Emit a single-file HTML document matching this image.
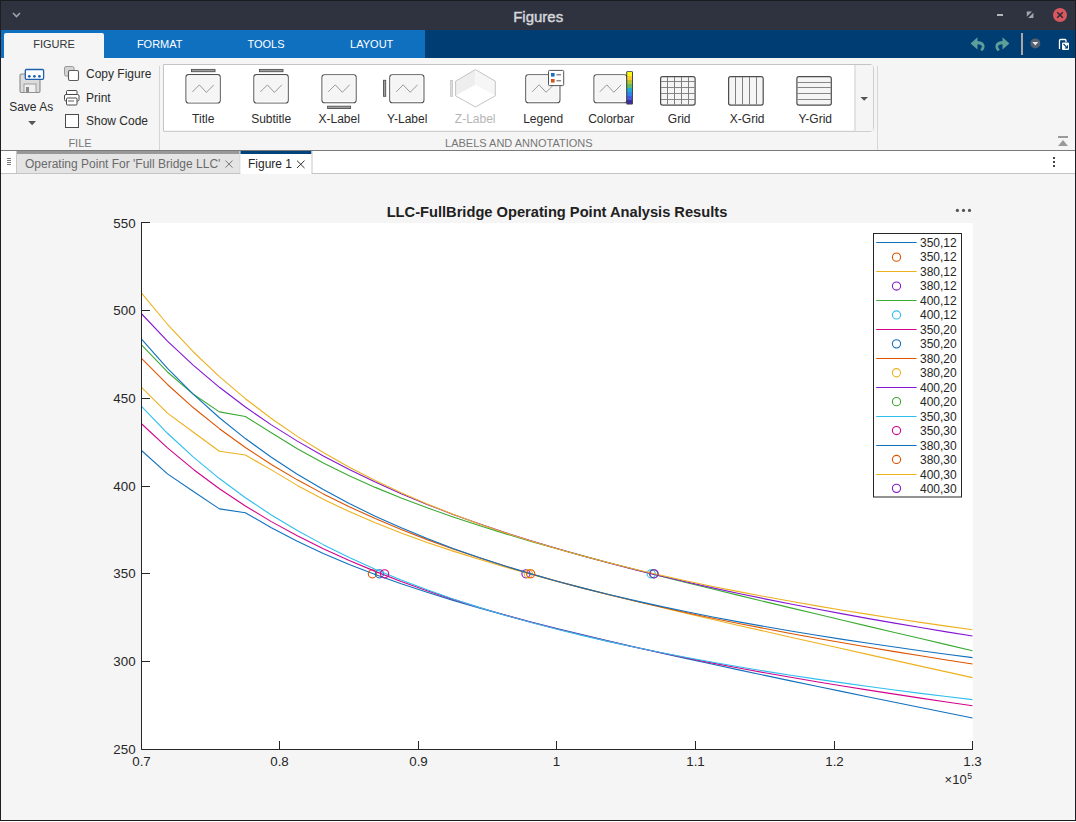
<!DOCTYPE html>
<html><head><meta charset="utf-8">
<style>
html,body{margin:0;padding:0;width:1076px;height:822px;overflow:hidden;background:#ffffff;}
svg{display:block;font-family:"Liberation Sans",sans-serif;}
.ui{font-size:12px;fill:#2b2b2b;}
.xt{font-size:13.33px;fill:#262626;text-anchor:middle;stroke:none;}
.yt{font-size:13.33px;fill:#262626;text-anchor:end;stroke:none;}
</style></head>
<body>
<svg width="1076" height="822" viewBox="0 0 1076 822">
<!-- window frame bg -->
<rect x="0" y="0" width="1076" height="822" fill="#ffffff"/>
<!-- title bar -->
<rect x="0" y="0" width="1076" height="30" fill="#2f3340"/>
<rect x="0" y="0" width="1076" height="1" fill="#1a1b20"/>
<path d="M13 13 L16.5 16.5 L20 13" stroke="#a0a3a8" stroke-width="1.6" fill="none"/>
<text x="538.2" y="22" text-anchor="middle" style="font-size:15px;fill:#d4d6da;stroke:#d4d6da;stroke-width:0.45">Figures</text>
<rect x="997" y="14" width="6" height="2" fill="#b4b6ba"/>
<path d="M1026.8 11.6 L1032 11.6 L1026.8 16.8 Z M1033.4 17.9 L1028.2 17.9 L1033.4 12.7 Z" fill="#a4a6aa"/>
<circle cx="1060" cy="15" r="7" fill="#d9575f"/>
<path d="M1057.2 12.2 L1062.8 17.8 M1062.8 12.2 L1057.2 17.8" stroke="#2b2b33" stroke-width="1.5"/>

<!-- tab strip -->
<rect x="0" y="30" width="1076" height="28" fill="#003d73"/>
<rect x="1" y="30" width="424" height="28" fill="#1070c0"/>
<path d="M4 58 L4 35 Q4 33 6 33 L102 33 Q104 33 104 35 L104 58 Z" fill="#f5f5f5"/>
<text x="54" y="48" text-anchor="middle" style="font-size:11px;fill:#333">FIGURE</text>
<text x="159.7" y="48" text-anchor="middle" style="font-size:11px;fill:#ffffff">FORMAT</text>
<text x="266" y="48" text-anchor="middle" style="font-size:11px;fill:#ffffff">TOOLS</text>
<text x="371.7" y="48" text-anchor="middle" style="font-size:11px;fill:#ffffff">LAYOUT</text>
<!-- undo / redo -->
<path d="M970.6 43.4 L977.5 37.3 L977.5 41 Q984.6 41.2 984.6 46.6 Q984.6 49.6 982.2 51.3 L980.2 49.4 Q981.9 48.4 981.9 46.6 Q981.9 44.3 977.5 44.2 L977.5 49.6 Z" fill="#5e9e9a"/>
<path d="M1009.4 43.4 L1002.5 37.3 L1002.5 41 Q995.4 41.2 995.4 46.6 Q995.4 49.6 997.8 51.3 L999.8 49.4 Q998.1 48.4 998.1 46.6 Q998.1 44.3 1002.5 44.2 L1002.5 49.6 Z" fill="#5e9e9a"/>
<rect x="1021" y="33" width="2" height="22" fill="#aaa6a4"/>
<circle cx="1035.3" cy="43.4" r="5" fill="#56606c"/>
<path d="M1032.3 42 L1038.3 42 L1035.3 45.5 Z" fill="#dfe8f5"/>
<path d="M1059.5 49 L1059.5 40.5 Q1059.5 39.5 1060.5 39.5 L1065 39.5 Q1066 39.5 1066 40.5 L1066 42" stroke="#ffffff" stroke-width="1.3" fill="none"/>
<rect x="1062" y="42.5" width="7" height="7.5" rx="1" fill="#ffffff"/>
<path d="M1063.5 44 L1067.3 47.8 M1067.5 45.3 L1067.5 48 L1064.8 48" stroke="#003d73" stroke-width="1.1" fill="none"/>

<!-- toolstrip body -->
<rect x="1" y="58" width="1074" height="92" fill="#f5f5f5"/>
<rect x="1" y="150" width="1074" height="1" fill="#7a7a7a"/>
<!-- FILE section -->

<path d="M21.5 74 L36 74 L40 78 L40 91 Q40 92.5 38.5 92.5 L21.5 92.5 Q20 92.5 20 91 L20 75.5 Q20 74 21.5 74 Z" fill="#dcdcdc" stroke="#8a8a8a" stroke-width="1.1"/>
<rect x="24" y="84" width="12" height="8.5" fill="#f0f0f0" stroke="#8a8a8a" stroke-width="0.8"/>
<rect x="26" y="87" width="3" height="5.5" fill="#8a8a8a"/>
<rect x="25.3" y="69.5" width="18.3" height="9.8" rx="1.2" fill="#ffffff" stroke="#1f5fb0" stroke-width="1.3"/>
<g fill="#1f5fb0"><circle cx="29.3" cy="76.3" r="1.35"/><circle cx="34.4" cy="76.3" r="1.35"/><circle cx="39.4" cy="76.3" r="1.35"/></g>
<text x="31.2" y="110.6" text-anchor="middle" class="ui">Save As</text>
<path d="M28.2 121 L36 121 L32.1 125.2 Z" fill="#555"/>
<rect x="64.5" y="66.5" width="9.5" height="9.5" rx="1.5" fill="#d4d4d4" stroke="#9a9a9a" stroke-width="1"/>
<rect x="68.5" y="70.5" width="10" height="10" rx="1.5" fill="#ffffff" stroke="#5a5a5a" stroke-width="1.1"/>
<text x="86" y="77.8" class="ui">Copy Figure</text>
<path d="M66.5 95 L66.5 91.5 Q66.5 90.5 67.5 90.5 L76 90.5 Q77 90.5 77 91.5 L77 95" fill="#ffffff" stroke="#4a4a4a" stroke-width="1"/>
<rect x="64.5" y="94.5" width="14.5" height="6.5" rx="1.5" fill="#ffffff" stroke="#4a4a4a" stroke-width="1"/>
<rect x="66.5" y="98" width="10.5" height="7" rx="1" fill="#ffffff" stroke="#4a4a4a" stroke-width="1"/>
<rect x="68" y="100.5" width="6" height="1" fill="#5a5a5a"/>
<text x="86" y="101.8" class="ui">Print</text>
<rect x="65.5" y="114.5" width="13" height="13" fill="#ffffff" stroke="#4a4a4a" stroke-width="1"/>
<text x="86" y="124.7" class="ui">Show Code</text>
<text x="80" y="146.8" text-anchor="middle" style="font-size:11px;fill:#777">FILE</text>

<rect x="159" y="66" width="1" height="84" fill="#d6d6d6"/>
<!-- labels gallery panel -->
<path d="M163.5 131.3 L163.5 64.5 L870 64.5 Q873.3 64.5 873.3 67.8 L873.3 128 Q873.3 131.3 870 131.3 Z" fill="#ffffff" stroke="#c4c4c4" stroke-width="1"/>
<rect x="854.5" y="65" width="18.3" height="65.8" fill="#f5f5f5"/>
<rect x="854.5" y="65" width="1" height="65.8" fill="#d0d0d0"/>
<path d="M860.4 97 L868 97 L864.2 100.7 Z" fill="#555"/>
<rect x="877" y="66" width="1" height="84" fill="#d6d6d6"/>
<text x="203.2" y="122.6" text-anchor="middle" style="font-size:12px;fill:#2b2b2b">Title</text>
<text x="271.2" y="122.6" text-anchor="middle" style="font-size:12px;fill:#2b2b2b">Subtitle</text>
<text x="339.2" y="122.6" text-anchor="middle" style="font-size:12px;fill:#2b2b2b">X-Label</text>
<text x="407.2" y="122.6" text-anchor="middle" style="font-size:12px;fill:#2b2b2b">Y-Label</text>
<text x="475.2" y="122.6" text-anchor="middle" style="font-size:12px;fill:#b4b4b4">Z-Label</text>
<text x="543.2" y="122.6" text-anchor="middle" style="font-size:12px;fill:#2b2b2b">Legend</text>
<text x="611.2" y="122.6" text-anchor="middle" style="font-size:12px;fill:#2b2b2b">Colorbar</text>
<text x="679.2" y="122.6" text-anchor="middle" style="font-size:12px;fill:#2b2b2b">Grid</text>
<text x="747.2" y="122.6" text-anchor="middle" style="font-size:12px;fill:#2b2b2b">X-Grid</text>
<text x="815.2" y="122.6" text-anchor="middle" style="font-size:12px;fill:#2b2b2b">Y-Grid</text>
<rect x="186.0" y="74.6" width="34.2" height="28.4" rx="2.5" fill="#f5f5f5" stroke="#505050" stroke-width="1.15"/><rect x="187.1" y="75.7" width="32.0" height="26.2" rx="1.5" fill="none" stroke="#ffffff" stroke-width="0.9"/><path d="M192.4 91.9 L199.4 84.9 L206.4 92.4 L213.8 84.9" stroke="#7a7a7a" stroke-width="0.75" fill="none"/>
<rect x="191.5" y="69.4" width="23.5" height="2.3" fill="#a0a0a0" stroke="#505050" stroke-width="0.9"/>
<rect x="253.9" y="74.6" width="34.3" height="28.4" rx="2.5" fill="#f5f5f5" stroke="#505050" stroke-width="1.15"/><rect x="255.0" y="75.7" width="32.1" height="26.2" rx="1.5" fill="none" stroke="#ffffff" stroke-width="0.9"/><path d="M260.4 91.9 L267.4 84.9 L274.4 92.4 L281.8 84.9" stroke="#7a7a7a" stroke-width="0.75" fill="none"/>
<rect x="259.5" y="69.4" width="23.5" height="2.3" fill="#a0a0a0" stroke="#505050" stroke-width="0.9"/>
<rect x="322.0" y="74.7" width="34.1" height="28.0" rx="2.5" fill="#f5f5f5" stroke="#505050" stroke-width="1.15"/><rect x="323.1" y="75.8" width="31.9" height="25.8" rx="1.5" fill="none" stroke="#ffffff" stroke-width="0.9"/><path d="M328.3 91.8 L335.3 84.8 L342.3 92.3 L349.7 84.8" stroke="#7a7a7a" stroke-width="0.75" fill="none"/>
<rect x="327.6" y="106.2" width="23" height="2.3" fill="#a0a0a0" stroke="#505050" stroke-width="0.9"/>
<rect x="389.8" y="74.7" width="34.1" height="28.0" rx="2.5" fill="#f5f5f5" stroke="#505050" stroke-width="1.15"/><rect x="390.9" y="75.8" width="31.9" height="25.8" rx="1.5" fill="none" stroke="#ffffff" stroke-width="0.9"/><path d="M396.2 91.8 L403.2 84.8 L410.2 92.3 L417.6 84.8" stroke="#7a7a7a" stroke-width="0.75" fill="none"/>
<rect x="383.5" y="80.3" width="2.2" height="16" fill="#a0a0a0" stroke="#505050" stroke-width="0.9"/>
<path d="M475.4 69.5 L455.6 81.2 L455.6 95.8 L475.4 85 Z" fill="#eeeeee"/>
<path d="M475.4 69.5 L495.3 81.2 L495.3 95.8 L475.4 85 Z" fill="#f6f6f6"/>
<path d="M475.4 85 L455.6 95.8 L475.4 107 L495.3 95.8 Z" fill="#ffffff"/>
<path d="M475.4 69.5 L495.3 81.2 L495.3 95.8 L475.4 107 L455.6 95.8 L455.6 81.2 Z" fill="none" stroke="#c4c4c4" stroke-width="1"/>
<rect x="450.6" y="80.4" width="1.8" height="16" fill="#dcdcdc" stroke="#c4c4c4" stroke-width="0.8"/>
<rect x="525.8" y="74.7" width="34.1" height="28.0" rx="2.5" fill="#f5f5f5" stroke="#505050" stroke-width="1.15"/><rect x="526.9" y="75.8" width="31.9" height="25.8" rx="1.5" fill="none" stroke="#ffffff" stroke-width="0.9"/><path d="M532.1 91.8 L539.1 84.8 L546.1 92.3 L553.6 84.8" stroke="#7a7a7a" stroke-width="0.75" fill="none"/>
<rect x="548.5" y="70.4" width="15.2" height="15.2" rx="1" fill="#ffffff" stroke="#555" stroke-width="1"/>
<rect x="551" y="73" width="3.6" height="3.6" fill="#1f6fc0"/><rect x="551" y="79" width="3.6" height="3.6" fill="#d9531e"/>
<rect x="556.5" y="74.3" width="4.5" height="1" fill="#555"/><rect x="556.5" y="80.3" width="4.5" height="1" fill="#555"/>
<rect x="594.0" y="74.7" width="32.9" height="28.0" rx="2.5" fill="#f5f5f5" stroke="#505050" stroke-width="1.15"/><rect x="595.1" y="75.8" width="30.7" height="25.8" rx="1.5" fill="none" stroke="#ffffff" stroke-width="0.9"/><path d="M599.8 91.8 L606.8 84.8 L613.8 92.3 L621.2 84.8" stroke="#7a7a7a" stroke-width="0.75" fill="none"/>
<rect x="626.3" y="71.2" width="6.6" height="33.4" rx="1" fill="#333"/>
<rect x="627.2" y="72.0" width="4.8" height="4" fill="#f9fb0e"/>
<rect x="627.2" y="76.0" width="4.8" height="4" fill="#fbc932"/>
<rect x="627.2" y="80.0" width="4.8" height="4" fill="#b5c62a"/>
<rect x="627.2" y="84.0" width="4.8" height="4" fill="#5fbe63"/>
<rect x="627.2" y="88.0" width="4.8" height="4" fill="#1eacd2"/>
<rect x="627.2" y="92.0" width="4.8" height="4" fill="#2f82f0"/>
<rect x="627.2" y="96.0" width="4.8" height="4" fill="#4357e0"/>
<rect x="627.2" y="100.0" width="4.8" height="4" fill="#3e2f9e"/>
<rect x="660.6" y="76.6" width="34.5" height="28.5" rx="2" fill="#f5f5f5" stroke="#4d4d4d" stroke-width="1.2"/><line x1="667.5" y1="77" x2="667.5" y2="104.7" stroke="#808080" stroke-width="1"/><line x1="674.5" y1="77" x2="674.5" y2="104.7" stroke="#808080" stroke-width="1"/><line x1="681.5" y1="77" x2="681.5" y2="104.7" stroke="#808080" stroke-width="1"/><line x1="688.5" y1="77" x2="688.5" y2="104.7" stroke="#808080" stroke-width="1"/><line x1="661" y1="81.5" x2="694.7" y2="81.5" stroke="#7a7a7a" stroke-width="0.9"/><line x1="661" y1="87.5" x2="694.7" y2="87.5" stroke="#7a7a7a" stroke-width="0.9"/><line x1="661" y1="93.5" x2="694.7" y2="93.5" stroke="#7a7a7a" stroke-width="0.9"/><line x1="661" y1="99.5" x2="694.7" y2="99.5" stroke="#7a7a7a" stroke-width="0.9"/>
<rect x="728.6" y="76.7" width="34.6" height="28.4" rx="2" fill="#f5f5f5" stroke="#4d4d4d" stroke-width="1.2"/><line x1="735.5" y1="77.1" x2="735.5" y2="104.7" stroke="#808080" stroke-width="1"/><line x1="742.5" y1="77.1" x2="742.5" y2="104.7" stroke="#808080" stroke-width="1"/><line x1="749.5" y1="77.1" x2="749.5" y2="104.7" stroke="#808080" stroke-width="1"/><line x1="756.5" y1="77.1" x2="756.5" y2="104.7" stroke="#808080" stroke-width="1"/>
<rect x="796.9" y="76.7" width="34.4" height="28.4" rx="2" fill="#f5f5f5" stroke="#4d4d4d" stroke-width="1.2"/><line x1="797.3" y1="82.5" x2="830.9" y2="82.5" stroke="#7a7a7a" stroke-width="0.9"/><line x1="797.3" y1="87.5" x2="830.9" y2="87.5" stroke="#7a7a7a" stroke-width="0.9"/><line x1="797.3" y1="93.5" x2="830.9" y2="93.5" stroke="#7a7a7a" stroke-width="0.9"/><line x1="797.3" y1="99.5" x2="830.9" y2="99.5" stroke="#7a7a7a" stroke-width="0.9"/>
<text x="518.8" y="146.7" text-anchor="middle" style="font-size:11px;fill:#777">LABELS AND ANNOTATIONS</text>
<!-- collapse icon -->
<rect x="1058" y="136" width="10" height="2" fill="#9a9a9a"/>
<path d="M1058 146 L1068 146 L1063 140 Z" fill="#9a9a9a"/>

<!-- document tab bar -->
<rect x="1" y="151" width="1074" height="22" fill="#ffffff"/>
<rect x="1" y="173" width="1074" height="1" fill="#c4c4c4"/>
<g fill="#7a7a7a"><rect x="7" y="158" width="4" height="1"/><rect x="7" y="160" width="4" height="1"/><rect x="7" y="162" width="4" height="1"/><rect x="7" y="164" width="4" height="1"/></g>
<rect x="16" y="151" width="223.5" height="22" fill="#e4e4e4"/>
<rect x="16" y="151" width="223.5" height="3" fill="#989898"/>
<rect x="239.5" y="151" width="1" height="22" fill="#c8c8c8"/>
<rect x="16" y="151" width="1" height="22" fill="#c8c8c8"/>
<text x="25" y="168" style="font-size:12px;fill:#6a6a6a">Operating Point For 'Full Bridge LLC'</text>
<path d="M225.5 160.6 L232.5 167.6 M232.5 160.6 L225.5 167.6" stroke="#777" stroke-width="1"/>
<rect x="240.5" y="151" width="71" height="23" fill="#ffffff"/>
<rect x="240.5" y="151" width="71" height="3" fill="#00427a"/>
<rect x="311.5" y="151" width="1" height="22" fill="#c8c8c8"/>
<text x="248" y="168" style="font-size:12px;fill:#262626">Figure 1</text>
<path d="M297 160.6 L304.5 168 M304.5 160.6 L297 168" stroke="#333" stroke-width="1"/>
<g fill="#444"><rect x="1053" y="157" width="2" height="2"/><rect x="1053" y="161" width="2" height="2"/><rect x="1053" y="165" width="2" height="2"/></g>

<!-- figure area -->
<rect x="1" y="174" width="1074" height="646" fill="#f5f5f5"/>
<!-- axes -->
<rect x="142" y="223" width="831" height="526" fill="#ffffff"/>
<text x="557" y="216.7" text-anchor="middle" style="font-size:14.67px;font-weight:bold;fill:#212121">LLC-FullBridge Operating Point Analysis Results</text>
<g fill="#555"><circle cx="957.4" cy="210.4" r="1.6"/><circle cx="963.5" cy="210.4" r="1.6"/><circle cx="969.5" cy="210.4" r="1.6"/></g>
<g fill="none" stroke-width="1.1" stroke-linejoin="round">
<path d="M141.50,450.52 L167.47,473.88 L193.44,491.45 L219.41,508.84 L245.37,512.70 L271.34,527.78 L297.31,541.30 L323.28,553.44 L349.25,564.45 L375.22,574.50 L401.19,583.75 L427.16,592.33 L453.13,600.36 L479.09,607.93 L505.06,615.10 L531.03,621.95 L557.00,628.53 L582.97,634.87 L608.94,641.03 L634.91,647.03 L660.88,652.90 L686.84,658.65 L712.81,664.31 L738.78,669.89 L764.75,675.41 L790.72,680.87 L816.69,686.28 L842.66,691.65 L868.63,696.98 L894.59,702.29 L920.56,707.56 L946.53,712.81 L972.50,718.04" stroke="#1171BE" fill="none" stroke-width="1.1" stroke-linejoin="round"/>
<circle cx="372.38" cy="573.83" r="4.1" stroke="#DD5400" fill="none" stroke-width="1.1"/>
<path d="M141.50,387.28 L167.47,413.10 L193.44,432.25 L219.41,451.22 L245.37,455.08 L271.34,469.88 L297.31,485.40 L323.28,499.21 L349.25,511.59 L375.22,522.79 L401.19,533.01 L427.16,542.41 L453.13,551.14 L479.09,559.31 L505.06,567.01 L531.03,574.34 L557.00,581.36 L582.97,588.12 L608.94,594.66 L634.91,601.04 L660.88,607.28 L686.84,613.41 L712.81,619.45 L738.78,625.42 L764.75,631.33 L790.72,637.19 L816.69,643.03 L842.66,648.83 L868.63,654.62 L894.59,660.39 L920.56,666.14 L946.53,671.89 L972.50,677.64" stroke="#EDB120" fill="none" stroke-width="1.1" stroke-linejoin="round"/>
<circle cx="525.98" cy="573.83" r="4.1" stroke="#8516D1" fill="none" stroke-width="1.1"/>
<path d="M141.50,344.94 L167.47,371.99 L193.44,394.30 L219.41,411.87 L245.37,416.44 L271.34,432.69 L297.31,448.68 L323.28,462.93 L349.25,475.75 L375.22,487.38 L401.19,498.02 L427.16,507.83 L453.13,516.96 L479.09,525.53 L505.06,533.63 L531.03,541.35 L557.00,548.75 L582.97,555.88 L608.94,562.81 L634.91,569.56 L660.88,576.17 L686.84,582.66 L712.81,589.06 L738.78,595.39 L764.75,601.65 L790.72,607.87 L816.69,614.06 L842.66,620.21 L868.63,626.34 L894.59,632.45 L920.56,638.54 L946.53,644.62 L972.50,650.69" stroke="#3BAA32" fill="none" stroke-width="1.1" stroke-linejoin="round"/>
<circle cx="651.18" cy="573.83" r="4.1" stroke="#2FBEEF" fill="none" stroke-width="1.1"/>
<path d="M141.50,423.74 L167.47,447.93 L193.44,469.45 L219.41,488.70 L245.37,506.00 L271.34,521.62 L297.31,535.78 L323.28,548.70 L349.25,560.51 L375.22,571.38 L401.19,581.41 L427.16,590.71 L453.13,599.37 L479.09,607.46 L505.06,615.05 L531.03,622.19 L557.00,628.94 L582.97,635.32 L608.94,641.40 L634.91,647.18 L660.88,652.71 L686.84,658.01 L712.81,663.09 L738.78,667.99 L764.75,672.71 L790.72,677.27 L816.69,681.68 L842.66,685.96 L868.63,690.12 L894.59,694.16 L920.56,698.09 L946.53,701.93 L972.50,705.67" stroke="#D1048B" fill="none" stroke-width="1.1" stroke-linejoin="round"/>
<circle cx="379.44" cy="573.83" r="4.1" stroke="#1171BE" fill="none" stroke-width="1.1"/>
<path d="M141.50,358.28 L167.47,384.47 L193.44,407.80 L219.41,428.69 L245.37,447.47 L271.34,464.44 L297.31,479.85 L323.28,493.89 L349.25,506.76 L375.22,518.58 L401.19,529.50 L427.16,539.63 L453.13,549.05 L479.09,557.85 L505.06,566.10 L531.03,573.86 L557.00,581.18 L582.97,588.12 L608.94,594.70 L634.91,600.97 L660.88,606.96 L686.84,612.68 L712.81,618.18 L738.78,623.46 L764.75,628.55 L790.72,633.46 L816.69,638.21 L842.66,642.81 L868.63,647.27 L894.59,651.60 L920.56,655.81 L946.53,659.92 L972.50,663.92" stroke="#DD5400" fill="none" stroke-width="1.1" stroke-linejoin="round"/>
<circle cx="528.33" cy="573.83" r="4.1" stroke="#EDB120" fill="none" stroke-width="1.1"/>
<path d="M141.50,313.75 L167.47,341.05 L193.44,365.43 L219.41,387.31 L245.37,407.03 L271.34,424.89 L297.31,441.13 L323.28,455.95 L349.25,469.55 L375.22,482.08 L401.19,493.65 L427.16,504.40 L453.13,514.40 L479.09,523.76 L505.06,532.53 L531.03,540.78 L557.00,548.57 L582.97,555.94 L608.94,562.94 L634.91,569.60 L660.88,575.95 L686.84,582.03 L712.81,587.86 L738.78,593.45 L764.75,598.84 L790.72,604.03 L816.69,609.04 L842.66,613.89 L868.63,618.59 L894.59,623.15 L920.56,627.58 L946.53,631.89 L972.50,636.08" stroke="#8516D1" fill="none" stroke-width="1.1" stroke-linejoin="round"/>
<circle cx="653.53" cy="573.83" r="4.1" stroke="#3BAA32" fill="none" stroke-width="1.1"/>
<path d="M141.50,406.39 L167.47,433.27 L193.44,457.19 L219.41,478.55 L245.37,497.71 L271.34,514.95 L297.31,530.52 L323.28,544.64 L349.25,557.49 L375.22,569.22 L401.19,579.97 L427.16,589.85 L453.13,598.95 L479.09,607.38 L505.06,615.20 L531.03,622.48 L557.00,629.27 L582.97,635.63 L608.94,641.60 L634.91,647.22 L660.88,652.53 L686.84,657.54 L712.81,662.30 L738.78,666.81 L764.75,671.12 L790.72,675.22 L816.69,679.15 L842.66,682.91 L868.63,686.52 L894.59,689.99 L920.56,693.34 L946.53,696.56 L972.50,699.67" stroke="#2FBEEF" fill="none" stroke-width="1.1" stroke-linejoin="round"/>
<circle cx="384.57" cy="573.83" r="4.1" stroke="#D1048B" fill="none" stroke-width="1.1"/>
<path d="M141.50,339.04 L167.47,368.38 L193.44,394.45 L219.41,417.72 L245.37,438.57 L271.34,457.31 L297.31,474.23 L323.28,489.55 L349.25,503.49 L375.22,516.21 L401.19,527.85 L427.16,538.55 L453.13,548.41 L479.09,557.53 L505.06,565.99 L531.03,573.87 L557.00,581.22 L582.97,588.11 L608.94,594.57 L634.91,600.65 L660.88,606.39 L686.84,611.83 L712.81,616.98 L738.78,621.88 L764.75,626.55 L790.72,631.01 L816.69,635.28 L842.66,639.37 L868.63,643.29 L894.59,647.07 L920.56,650.72 L946.53,654.23 L972.50,657.63" stroke="#1171BE" fill="none" stroke-width="1.1" stroke-linejoin="round"/>
<circle cx="530.69" cy="573.83" r="4.1" stroke="#DD5400" fill="none" stroke-width="1.1"/>
<path d="M141.50,293.04 L167.47,324.27 L193.44,351.98 L219.41,376.65 L245.37,398.70 L271.34,418.51 L297.31,436.36 L323.28,452.50 L349.25,467.17 L375.22,480.54 L401.19,492.77 L427.16,504.00 L453.13,514.35 L479.09,523.92 L505.06,532.80 L531.03,541.06 L557.00,548.78 L582.97,556.01 L608.94,562.81 L634.91,569.21 L660.88,575.26 L686.84,581.00 L712.81,586.44 L738.78,591.63 L764.75,596.58 L790.72,601.31 L816.69,605.85 L842.66,610.21 L868.63,614.41 L894.59,618.45 L920.56,622.36 L946.53,626.14 L972.50,629.80" stroke="#EDB120" fill="none" stroke-width="1.1" stroke-linejoin="round"/>
<circle cx="654.09" cy="573.83" r="4.1" stroke="#8516D1" fill="none" stroke-width="1.1"/>
</g>
<g fill="none" stroke-width="1.1">

</g>
<g stroke="#262626" stroke-width="1" fill="none">
<path d="M141.5 222 L141.5 749.5 L973 749.5"/>
<line x1="141.50" y1="749.50" x2="141.50" y2="741.00"/>
<text class="xt" x="141.50" y="766">0.7</text>
<line x1="279.50" y1="749.50" x2="279.50" y2="741.00"/>
<text class="xt" x="279.50" y="766">0.8</text>
<line x1="418.50" y1="749.50" x2="418.50" y2="741.00"/>
<text class="xt" x="418.50" y="766">0.9</text>
<line x1="556.50" y1="749.50" x2="556.50" y2="741.00"/>
<text class="xt" x="556.50" y="766">1</text>
<line x1="695.50" y1="749.50" x2="695.50" y2="741.00"/>
<text class="xt" x="695.50" y="766">1.1</text>
<line x1="834.50" y1="749.50" x2="834.50" y2="741.00"/>
<text class="xt" x="834.50" y="766">1.2</text>
<line x1="972.50" y1="749.50" x2="972.50" y2="741.00"/>
<text class="xt" x="972.50" y="766">1.3</text>
<line x1="141.50" y1="749.50" x2="150.00" y2="749.50"/>
<text class="yt" x="135.6" y="754.20">250</text>
<line x1="141.50" y1="661.50" x2="150.00" y2="661.50"/>
<text class="yt" x="135.6" y="666.20">300</text>
<line x1="141.50" y1="573.50" x2="150.00" y2="573.50"/>
<text class="yt" x="135.6" y="578.20">350</text>
<line x1="141.50" y1="486.50" x2="150.00" y2="486.50"/>
<text class="yt" x="135.6" y="491.20">400</text>
<line x1="141.50" y1="398.50" x2="150.00" y2="398.50"/>
<text class="yt" x="135.6" y="403.20">450</text>
<line x1="141.50" y1="310.50" x2="150.00" y2="310.50"/>
<text class="yt" x="135.6" y="315.20">500</text>
<line x1="141.50" y1="222.50" x2="150.00" y2="222.50"/>
<text class="yt" x="135.6" y="228.20">550</text>
</g>
<text x="944.6" y="784" style="font-size:13px;fill:#262626">×10</text>
<text x="967.2" y="778.9" style="font-size:8.6px;fill:#262626">5</text>
<!-- legend -->
<rect x="873.5" y="233.5" width="88" height="263.5" fill="#ffffff" stroke="#262626" stroke-width="1"/>
<g style="font-size:12px;fill:#262626" stroke-width="1.1" fill="none">
<line x1="876.2" y1="242.50" x2="916.6" y2="242.50" stroke="#1171BE"/>
<text x="920" y="246.80">350,12</text>
<circle cx="896.5" cy="257.15" r="4.1" stroke="#DD5400" fill="none"/>
<text x="920" y="261.45">350,12</text>
<line x1="876.2" y1="271.50" x2="916.6" y2="271.50" stroke="#EDB120"/>
<text x="920" y="275.80">380,12</text>
<circle cx="896.5" cy="286.05" r="4.1" stroke="#8516D1" fill="none"/>
<text x="920" y="290.35">380,12</text>
<line x1="876.2" y1="300.50" x2="916.6" y2="300.50" stroke="#3BAA32"/>
<text x="920" y="304.80">400,12</text>
<circle cx="896.5" cy="314.95" r="4.1" stroke="#2FBEEF" fill="none"/>
<text x="920" y="319.25">400,12</text>
<line x1="876.2" y1="329.50" x2="916.6" y2="329.50" stroke="#D1048B"/>
<text x="920" y="333.80">350,20</text>
<circle cx="896.5" cy="343.85" r="4.1" stroke="#1171BE" fill="none"/>
<text x="920" y="348.15">350,20</text>
<line x1="876.2" y1="358.50" x2="916.6" y2="358.50" stroke="#DD5400"/>
<text x="920" y="362.80">380,20</text>
<circle cx="896.5" cy="372.75" r="4.1" stroke="#EDB120" fill="none"/>
<text x="920" y="377.05">380,20</text>
<line x1="876.2" y1="387.50" x2="916.6" y2="387.50" stroke="#8516D1"/>
<text x="920" y="391.80">400,20</text>
<circle cx="896.5" cy="401.65" r="4.1" stroke="#3BAA32" fill="none"/>
<text x="920" y="405.95">400,20</text>
<line x1="876.2" y1="416.50" x2="916.6" y2="416.50" stroke="#2FBEEF"/>
<text x="920" y="420.80">350,30</text>
<circle cx="896.5" cy="430.55" r="4.1" stroke="#D1048B" fill="none"/>
<text x="920" y="434.85">350,30</text>
<line x1="876.2" y1="445.50" x2="916.6" y2="445.50" stroke="#1171BE"/>
<text x="920" y="449.80">380,30</text>
<circle cx="896.5" cy="459.45" r="4.1" stroke="#DD5400" fill="none"/>
<text x="920" y="463.75">380,30</text>
<line x1="876.2" y1="474.50" x2="916.6" y2="474.50" stroke="#EDB120"/>
<text x="920" y="478.80">400,30</text>
<circle cx="896.5" cy="488.35" r="4.1" stroke="#8516D1" fill="none"/>
<text x="920" y="492.65">400,30</text>
</g>
<!-- window borders -->
<rect x="0" y="0" width="1" height="821" fill="#1e1e22"/>
<rect x="1075" y="0" width="1" height="821" fill="#1e1e22"/>
<rect x="0" y="820" width="1076" height="1" fill="#1e1e22"/>
</svg>
</body></html>
